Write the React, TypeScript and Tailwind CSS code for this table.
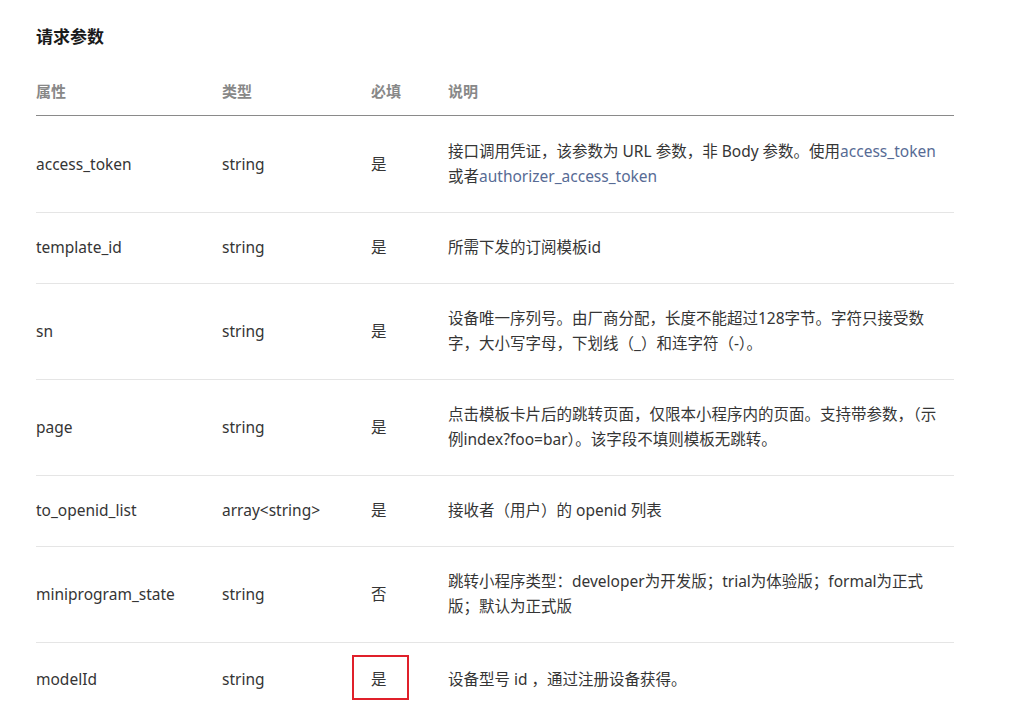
import React from "react";

type Row = {
  name: string;
  type: string;
  required: string;
  desc: React.ReactNode;
  mark?: boolean;
};

const Link = ({ children }: { children: React.ReactNode }) => (
  <span className="text-[#576b95]">{children}</span>
);

const rows: Row[] = [
  {
    name: "access_token",
    type: "string",
    required: "是",
    desc: (
      <>
        接口调用凭证，该参数为 URL 参数，非 Body 参数。使用<Link>access_token</Link>或者<Link>authorizer_access_token</Link>
      </>
    ),
  },
  { name: "template_id", type: "string", required: "是", desc: "所需下发的订阅模板id" },
  {
    name: "sn",
    type: "string",
    required: "是",
    desc: "设备唯一序列号。由厂商分配，长度不能超过128字节。字符只接受数字，大小写字母，下划线（_）和连字符（-）。",
  },
  {
    name: "page",
    type: "string",
    required: "是",
    desc: "点击模板卡片后的跳转页面，仅限本小程序内的页面。支持带参数，（示例index?foo=bar）。该字段不填则模板无跳转。",
  },
  { name: "to_openid_list", type: "array<string>", required: "是", desc: "接收者（用户）的 openid 列表" },
  {
    name: "miniprogram_state",
    type: "string",
    required: "否",
    desc: "跳转小程序类型：developer为开发版；trial为体验版；formal为正式版；默认为正式版",
  },
  { name: "modelId", type: "string", required: "是", desc: "设备型号 id ，通过注册设备获得。", mark: true },
];

export default function App() {
  return (
    <div
      className="min-h-screen bg-white pl-[36px] pt-[24px] text-[15.5px] text-[#353535]"
      style={{ fontFamily: '"Noto Sans", "Noto Sans CJK SC", sans-serif' }}
    >
      <h2 className="text-[17px] font-bold leading-[26px] text-[#1a1a1a]">请求参数</h2>
      <table className="mt-[29px] w-[918px] table-fixed border-collapse">
        <colgroup>
          <col className="w-[186px]" />
          <col className="w-[149px]" />
          <col className="w-[77px]" />
          <col />
        </colgroup>
        <thead>
          <tr className="border-b border-[#8a8a8a] text-left text-[15px] font-bold text-[#888]">
            <th className="pb-[12px] font-bold leading-[24px]">属性</th>
            <th className="pb-[12px] font-bold leading-[24px]">类型</th>
            <th className="pb-[12px] font-bold leading-[24px]">必填</th>
            <th className="pb-[12px] font-bold leading-[24px]">说明</th>
          </tr>
        </thead>
        <tbody className="[&>tr:first-child>td]:pt-[23px] [&>tr:last-child>td]:pt-[24px]">
          {rows.map((r) => (
            <tr key={r.name} className="border-b border-[#e5e5e5] align-middle leading-[25px]">
              <td className="pt-[22px] pb-[23px]">{r.name}</td>
              <td className="pt-[22px] pb-[23px]">{r.type}</td>
              <td className="pt-[22px] pb-[23px]">
                <span className="relative inline-block">
                  {r.required}
                  {/* highlight box drawn over the cell */}
                  {r.mark && (
                    <span className="absolute left-[-19px] top-[-12px] h-[45px] w-[57px] border-2 border-[#e0202a]" />
                  )}
                </span>
              </td>
              <td className="pt-[22px] pb-[23px] pr-[4px]">{r.desc}</td>
            </tr>
          ))}
        </tbody>
      </table>
    </div>
  );
}
